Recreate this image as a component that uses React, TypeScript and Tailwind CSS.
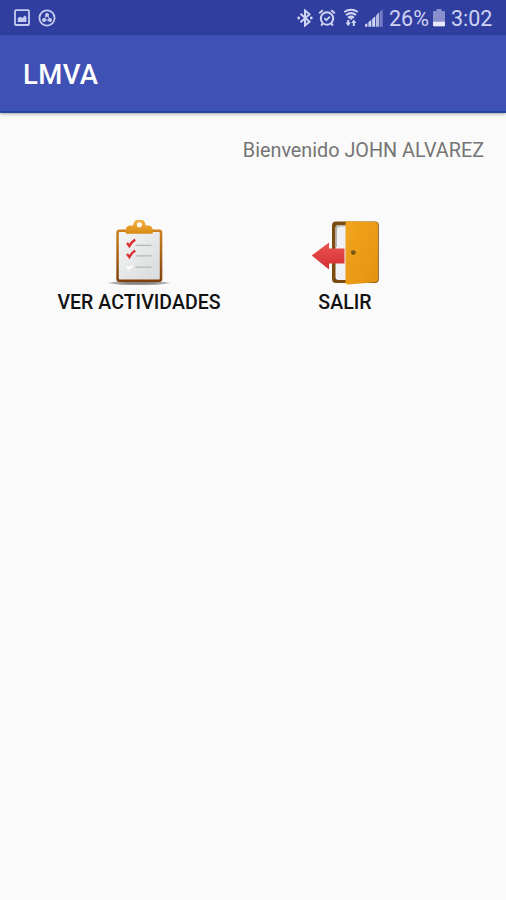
import React from 'react';

const PictureIcon: React.FC = () => (
  <svg width="16" height="18" viewBox="0 0 16 18" fill="none">
    <rect x="1" y="1.2" width="14" height="14.8" rx="1" stroke="#c5caf0" strokeWidth="1.8" />
    <path d="M3.8 13V9l2.4-1.2 2 1.2L11 6.5l1.4 1.5v5z" fill="#c5caf0" />
  </svg>
);

const CircleIcon: React.FC = () => (
  <svg width="18" height="18" viewBox="0 0 18 18" fill="none">
    <circle cx="9" cy="9" r="7.6" stroke="#c5caf0" strokeWidth="1.8" />
    <path d="M9 5.5L5.8 11h6.4z" stroke="#c5caf0" strokeWidth="1" />
    <circle cx="9" cy="6" r="2" fill="#c5caf0" />
    <circle cx="6" cy="11" r="2" fill="#c5caf0" />
    <circle cx="12" cy="11" r="2" fill="#c5caf0" />
  </svg>
);

const BluetoothIcon: React.FC = () => (
  <svg width="16" height="18" viewBox="0 0 16 18" fill="none">
    <path d="M3.5 4.8l9 8L8 16.5v-15l4.5 3.7-9 8" stroke="#d0d4f3" strokeWidth="2" />
    <circle cx="1.7" cy="9" r="1.4" fill="#d0d4f3" />
    <circle cx="14.3" cy="9" r="1.4" fill="#d0d4f3" />
  </svg>
);

const AlarmIcon: React.FC = () => (
  <svg width="18" height="18" viewBox="0 0 18 18" fill="none" stroke="#d0d4f3">
    <circle cx="9" cy="9.5" r="6.2" strokeWidth="2" />
    <path d="M1.2 4.2L4.8 1.2M16.8 4.2l-3.6-3M4.8 14.2l-1.6 2.4M13.2 14.2l1.6 2.4" strokeWidth="2" />
    <path d="M6.3 9.2l2 2 3.6-3.6" strokeWidth="1.7" />
  </svg>
);

const WifiIcon: React.FC = () => (
  <svg width="16" height="19" viewBox="0 0 16 19" fill="none">
    <path d="M1.2 4Q8-.4 14.8 4M3 7Q8 3.2 13 7M5 9.8q3-2.3 6 0" stroke="#d0d4f3" strokeWidth="2" />
    <path d="M5.5 9.6h5L8 12z" fill="#d0d4f3" />
    <path d="M5.2 12v4M10.8 14v4" stroke="#d0d4f3" strokeWidth="2" />
    <path d="M2.6 14.6h5.2l-2.6 3.6zM8.2 15h5.2l-2.6-3.6z" fill="#d0d4f3" />
  </svg>
);

const SignalIcon: React.FC = () => (
  <svg width="18" height="18" viewBox="0 0 18 18">
    <path d="M0 15.5l2.4-1.2v3.4H0zM3.4 13.2l2.9-2.4v6.9H3.4zM7.2 10l3-2.8v10.5h-3z" fill="#d0d4f3" />
    <path d="M11 6.4l3-2.8v14.1h-3z" fill="#b6bbe6" />
    <path d="M14.6 3l3-2.6v17.3h-3z" fill="#7780c4" />
  </svg>
);

const BatteryIcon: React.FC = () => (
  <svg width="12" height="18" viewBox="0 0 12 18">
    <path d="M3.5 0h5v2H11q1 0 1 1v13.5q0 .8-1 .8H1q-1 0-1-.8V3q0-1 1-1h2.5z" fill="#8790cd" />
    <path d="M0 12.8h12v3.7q0 .8-1 .8H1q-1 0-1-.8z" fill="#e8eafb" />
  </svg>
);

const ClipboardIcon: React.FC = () => (
  <svg width="66" height="68" viewBox="0 0 66 68" fill="none">
    <defs>
      <linearGradient id="board" x1="0" y1="0" x2="0" y2="1">
        <stop offset="0" stopColor="#cf8420" />
        <stop offset="1" stopColor="#7e3f0e" />
      </linearGradient>
      <linearGradient id="paper" x1="0" y1="0" x2="1" y2="1">
        <stop offset="0" stopColor="#f4f5f5" />
        <stop offset="1" stopColor="#d8dadb" />
      </linearGradient>
      <linearGradient id="clip" x1="0" y1="0" x2="0" y2="1">
        <stop offset="0" stopColor="#f6b541" />
        <stop offset="1" stopColor="#d98a12" />
      </linearGradient>
      <radialGradient id="shade">
        <stop offset="0.4" stopColor="#858585" />
        <stop offset="0.8" stopColor="#b4b4b4" />
        <stop offset="1" stopColor="#d8d8d8" stopOpacity="0" />
      </radialGradient>
    </defs>
    <ellipse cx="33" cy="63" rx="33" ry="2.6" fill="url(#shade)" />
    <rect x="10.3" y="9.5" width="46" height="52.5" rx="3" fill="url(#board)" />
    <rect x="12.8" y="12" width="41" height="47.5" rx="1" fill="url(#paper)" />
    <path
      d="M21.2 13.8q-1.8 0-1.8-1.6Q19.4 5.5 24 5.5h2Q27.4 5.5 27.4 4.6a6 5.4 0 0 1 12 0q0 .9 1.5 .9h1.6q4.5 0 4.5 6.7 0 1.6-1.6 1.6z"
      fill="url(#clip)"
    />
    <circle cx="33.4" cy="4.8" r="2.6" fill="#fafafa" />
    <path d="M29.5 25.3h16M29.5 35.8h16M29.5 47.2h16" stroke="#b3b6b7" strokeWidth="1.2" />
    <path d="M21 23l2.4 3q2-3.8 5.8-6.4M21 34l2.4 3q2-3.8 5.8-6.4" stroke="#dd2d32" strokeWidth="2.4" />
    <path d="M21 46.5l2 2 3.6-3" stroke="#fff" strokeWidth="2.2" />
  </svg>
);

const ExitIcon: React.FC = () => (
  <svg width="68" height="66" viewBox="0 0 68 66">
    <defs>
      <linearGradient id="door" x1="0" y1="0" x2="1" y2="1">
        <stop offset="0" stopColor="#f2a51f" />
        <stop offset="1" stopColor="#e2920f" />
      </linearGradient>
      <linearGradient id="arrow" x1="0" y1="0" x2="0" y2="1">
        <stop offset="0" stopColor="#ea5350" />
        <stop offset="1" stopColor="#d42e33" />
      </linearGradient>
    </defs>
    <rect x="21" y="1.5" width="46.8" height="61.5" rx="4" fill="#7c4b12" />
    <path d="M24.5 8q0-3 3-3H40v55H27.5q-3 0-3-3z" fill="#f0f1f4" />
    <path d="M24.5 10V8q0-3 3-3H35v1.5h-6Q26 6.5 26 10v17h-1.5z" fill="#b9b3ad" />
    <path d="M34.5 3.5Q34.5 1 37 1.2L64 2q3 .2 3 3v54q0 3-3 3.2L37 64.5q-2.5 0-2.5-2.5z" fill="url(#door)" />
    <circle cx="42.3" cy="32.5" r="2.3" fill="#6c4a0d" />
    <circle cx="42.3" cy="32" r="0.8" fill="#94813b" />
    <path d="M.7 35.5L18 22.5v6h15.5v15H18v6z" fill="url(#arrow)" />
  </svg>
);

const StatusBar: React.FC = () => (
  <div className="flex h-[35px] items-center bg-[#303f9f] pr-[14px] pl-[14px] text-[21.5px] text-[#cfd3f3]">
    <PictureIcon />
    <div className="ml-[8px]">
      <CircleIcon />
    </div>
    <div className="ml-auto flex items-center">
      <BluetoothIcon />
      <div className="ml-[5px]">
        <AlarmIcon />
      </div>
      <div className="ml-[7px]">
        <WifiIcon />
      </div>
      <div className="ml-[6px]">
        <SignalIcon />
      </div>
      <span className="ml-[6px] w-[44px] pt-[2px] leading-none whitespace-nowrap">26%</span>
      <BatteryIcon />
      <span className="ml-[6px] w-[41px] pt-[2px] leading-none whitespace-nowrap">3:02</span>
    </div>
  </div>
);

type MenuItemProps = {
  label: string;
  children: React.ReactNode;
};

const MenuItem: React.FC<MenuItemProps> = ({ label, children }) => (
  <button type="button" className="flex flex-col items-center">
    <div className="h-[72px]">{children}</div>
    <span className="text-[19.5px] leading-[22px] font-medium tracking-[0.05px] whitespace-nowrap text-[#111]">
      {label}
    </span>
  </button>
);

const App: React.FC = () => {
  return (
    <div className="h-[900px] w-full overflow-hidden bg-[#fafafa] font-['Roboto',sans-serif]">
      <StatusBar />
      <header className="flex h-[78px] items-center border-b-2 border-[#2445a0] bg-[#3f51b5] pt-[4px] pl-[23px] shadow-[0_1px_3px_rgba(0,0,0,0.35)]">
        <h1 className="text-[27.5px] leading-none font-medium tracking-[0.4px] text-white">LMVA</h1>
      </header>
      <main>
        <p className="pt-[26px] pr-[22px] text-right text-[19.8px] leading-[24px] text-[#757575]">
          Bienvenido JOHN ALVAREZ
        </p>
        <div className="mt-[57px] ml-[36px] grid w-[412px] grid-cols-2">
          <MenuItem label="VER ACTIVIDADES">
            <ClipboardIcon />
          </MenuItem>
          <MenuItem label="SALIR">
            <ExitIcon />
          </MenuItem>
        </div>
      </main>
    </div>
  );
};

export default App;
